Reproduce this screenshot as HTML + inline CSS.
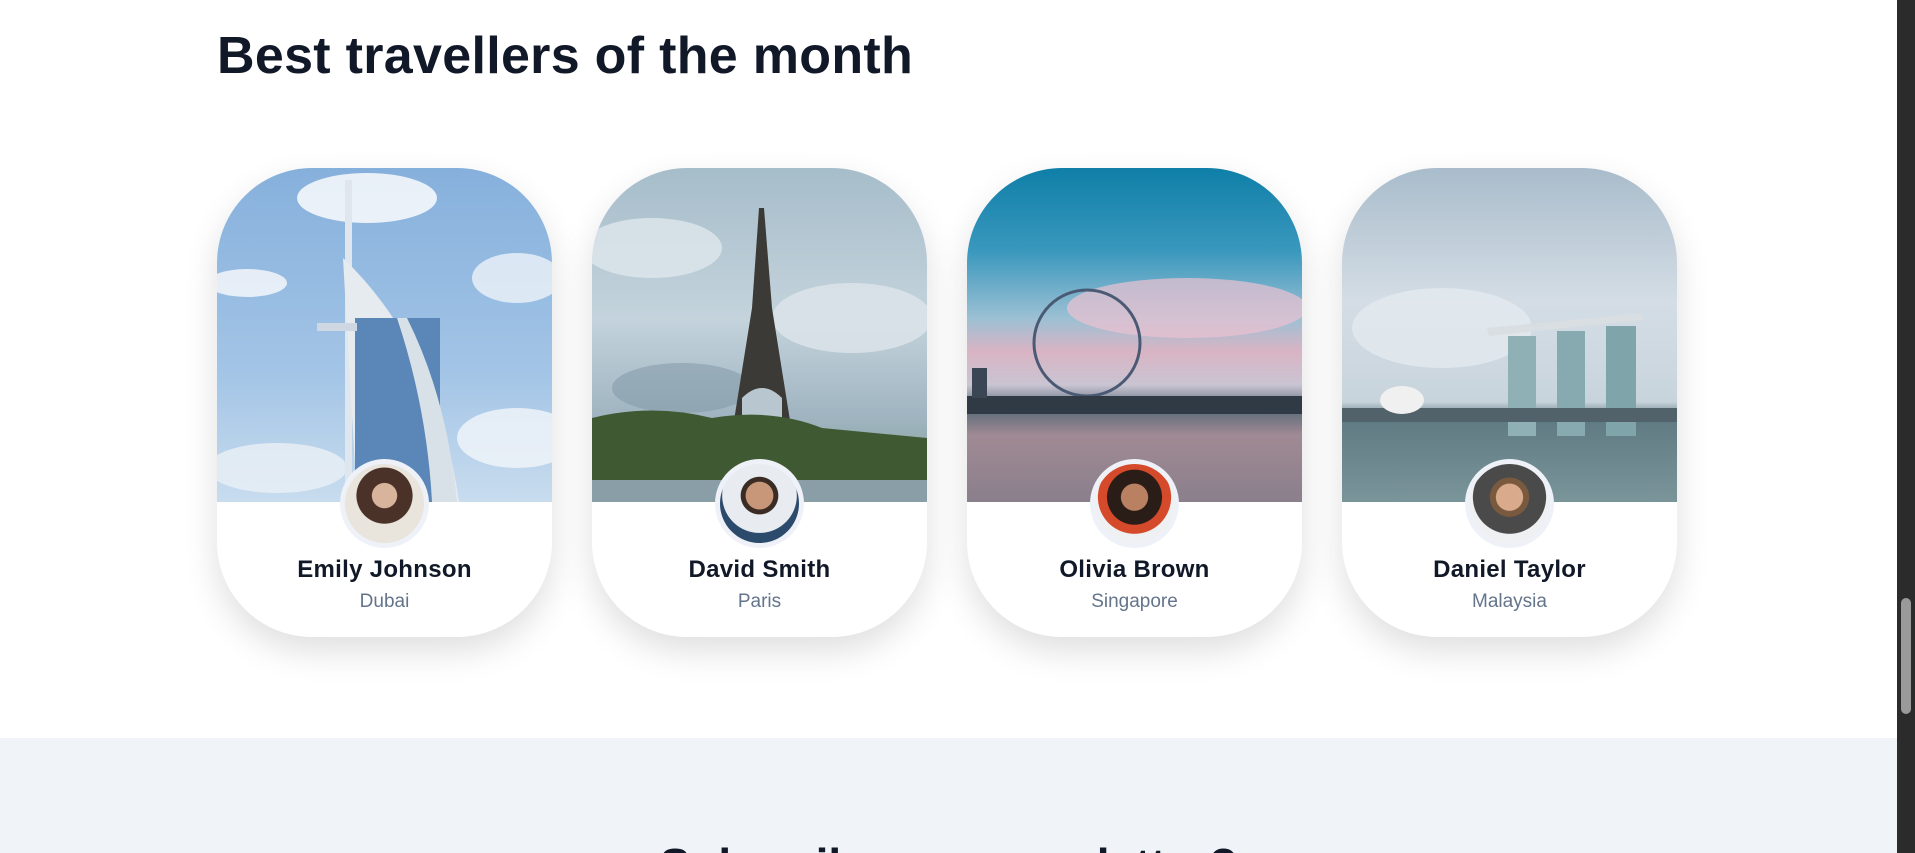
<!DOCTYPE html>
<html><head><meta charset="utf-8"><style>
*{margin:0;padding:0;box-sizing:border-box}
html,body{width:1915px;height:853px;overflow:hidden}
body{background:#fff;font-family:"Liberation Sans",sans-serif;position:relative}
h1{position:absolute;left:217px;top:27px;font-size:52px;line-height:1.15;font-weight:700;color:#111827;letter-spacing:0.3px}
.card{position:absolute;top:168px;width:335px;height:469px;border-radius:95px;background:#fff;box-shadow:0 14px 34px rgba(0,0,0,.13);overflow:hidden}
.img{position:absolute;left:0;top:0;width:335px;height:334px;overflow:hidden}
.av{position:absolute;left:123px;top:291px;width:89px;height:89px;border-radius:50%;background:#eef2f8;padding:5px}
.av div{width:100%;height:100%;border-radius:50%;overflow:hidden;position:relative}
.nm{position:absolute;top:388px;width:100%;text-align:center;font-size:24px;font-weight:700;color:#111827;letter-spacing:0.3px}
.ct{position:absolute;top:423px;width:100%;text-align:center;font-size:19px;color:#64748b}
.gray{position:absolute;left:0;top:738px;width:1897px;height:115px;background:#f0f3f8}
.sub{position:absolute;left:0;top:842px;width:1897px;text-align:center;font-size:46px;line-height:1;font-weight:700;color:#111827}
.sb{position:absolute;right:0;top:0;width:18px;height:853px;background:#2b2b2b}
.th{position:absolute;right:4px;top:598px;width:10px;height:116px;background:#9a9a9a;border-radius:5px}
</style></head><body>
<h1>Best travellers of the month</h1>

<div class="card" style="left:217px">
<div class="img" style="background:linear-gradient(180deg,#86b0dc 0%,#a2c4e6 60%,#c8dcee 100%)">
<svg width="335" height="334"><ellipse cx="150" cy="30" rx="70" ry="25" fill="#f4f7fb" opacity=".9"/><ellipse cx="30" cy="115" rx="40" ry="14" fill="#eef3f9" opacity=".9"/><ellipse cx="300" cy="110" rx="45" ry="25" fill="#eef3f9" opacity=".8"/><ellipse cx="300" cy="270" rx="60" ry="30" fill="#eef3f9" opacity=".85"/><ellipse cx="60" cy="300" rx="70" ry="25" fill="#e8eef5" opacity=".85"/>
<rect x="128" y="12" width="7" height="330" fill="#dfe6ee"/><path d="M126 90 Q220 180 242 334 L140 334 Z" fill="#e6ebf0"/><rect x="138" y="150" width="85" height="184" fill="#5a86b8"/><path d="M190 150 Q230 230 240 334 L215 334 Q210 240 180 150Z" fill="#d8e0e8"/><rect x="100" y="155" width="40" height="8" fill="#cfd8e2"/></svg>
</div>
<div class="av"><div style="background:radial-gradient(circle at 50% 40%,#d9b49c 0 20%,#4a3228 21% 45%,#e9e4dc 46%)"></div></div>
<div class="nm">Emily Johnson</div><div class="ct">Dubai</div></div>

<div class="card" style="left:592px">
<div class="img" style="background:linear-gradient(180deg,#a6bdca 0%,#c4d3dc 45%,#9fb4c0 75%,#7f9a86 100%)">
<svg width="335" height="334"><ellipse cx="60" cy="80" rx="70" ry="30" fill="#dfe7ec" opacity=".8"/><ellipse cx="260" cy="150" rx="80" ry="35" fill="#dde5ea" opacity=".8"/><ellipse cx="90" cy="220" rx="70" ry="25" fill="#7d96a4" opacity=".5"/>
<path d="M167 40 L172 40 L180 140 L200 265 L140 265 L160 140Z" fill="#3c3a36"/><path d="M150 230 Q170 210 190 230 L190 265 L150 265Z" fill="#b8c6cf"/>
<path d="M0 250 Q60 235 120 250 Q180 240 230 260 L335 270 L335 334 L0 334Z" fill="#3f5a32"/><rect x="0" y="312" width="335" height="22" fill="#8a9ea8"/></svg>
</div>
<div class="av"><div style="background:radial-gradient(circle at 50% 40%,#c89678 0 22%,#3a2c24 23% 30%,#e8ecf0 31% 60%,#2c4a6c 61%)"></div></div>
<div class="nm">David Smith</div><div class="ct">Paris</div></div>

<div class="card" style="left:967px">
<div class="img" style="background:linear-gradient(180deg,#0f7fa8 0%,#3a98bd 25%,#9cc0d4 45%,#d9b4c4 55%,#c9c4d2 65%,#5a6a78 72%,#a08a94 80%,#8a7f8c 100%)">
<svg width="335" height="334"><ellipse cx="220" cy="140" rx="120" ry="30" fill="#ecc2d2" opacity=".7"/><circle cx="120" cy="175" r="53" fill="none" stroke="#4b5a74" stroke-width="3"/><rect x="0" y="228" width="335" height="18" fill="#2f3a44"/><rect x="5" y="200" width="15" height="30" fill="#3a4654"/></svg>
</div>
<div class="av"><div style="background:radial-gradient(circle at 50% 42%,#b98062 0 22%,#2a1c16 23% 45%,#d44a2a 46% 60%,#eef0f2 61%)"></div></div>
<div class="nm">Olivia Brown</div><div class="ct">Singapore</div></div>

<div class="card" style="left:1342px">
<div class="img" style="background:linear-gradient(180deg,#a9bccb 0%,#d4dde5 40%,#c8d4dc 70%,#5f7a82 75%,#7a959a 100%)">
<svg width="335" height="334"><ellipse cx="100" cy="160" rx="90" ry="40" fill="#e4eaef" opacity=".8"/><path d="M145 160 L300 145 L302 152 L147 168Z" fill="#d8dee2"/><rect x="166" y="168" width="28" height="100" fill="#8fb1b6"/><rect x="215" y="163" width="28" height="105" fill="#86aab0"/><rect x="264" y="158" width="30" height="110" fill="#7fa4aa"/><rect x="0" y="240" width="335" height="14" fill="#52626a"/><ellipse cx="60" cy="232" rx="22" ry="14" fill="#f0f0f0"/></svg>
</div>
<div class="av"><div style="background:radial-gradient(circle at 50% 42%,#d9ab8c 0 22%,#7a5a3e 23% 32%,#4a4a4a 33% 60%,#eef0f2 61%)"></div></div>
<div class="nm">Daniel Taylor</div><div class="ct">Malaysia</div></div>

<div class="gray"></div>
<div class="sub">Subscribe our newsletter?</div>
<div class="sb"><div class="th"></div></div>
</body></html>
